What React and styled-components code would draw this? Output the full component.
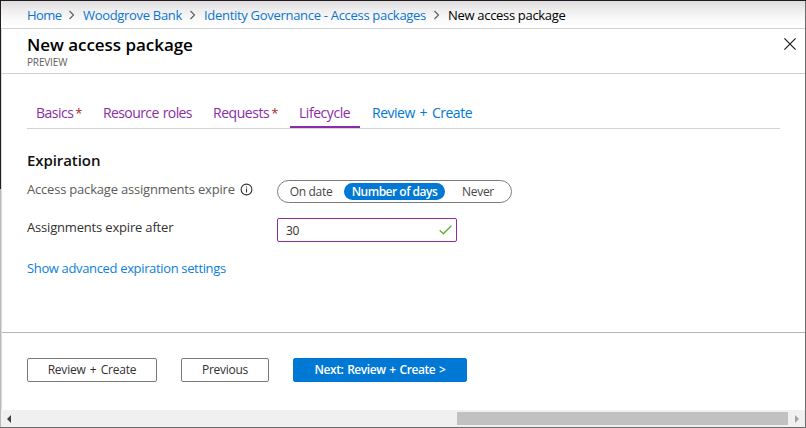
import React from "react";
import styled, { createGlobalStyle } from "styled-components";

const Global = createGlobalStyle`
  * { box-sizing: border-box; }
  body { margin: 0; overflow: hidden; background: #fff; }
  button, input { font: inherit; margin: 0; }
`;

const Label = styled.span`
  letter-spacing: ${(p) => p.$track || 0}px;
  word-spacing: ${(p) => p.$words || 0}px;
  white-space: nowrap;
`;

const Window = styled.div`
  display: grid;
  grid-template-columns: 1px 1fr 1px;
  grid-template-rows: 1px 426px 1px;
  width: 806px;
  height: 428px;
  font-family: "Open Sans", "Noto Sans", sans-serif;
  color: #323130;
`;
const TopEdge = styled.div`
  grid-column: 1 / -1;
  background: #1f1a1e;
`;
const LeftEdge = styled.div`
  background: linear-gradient(#231f20 188px, #b9b9b9 188px);
`;
const RightEdge = styled.div`
  background: #6b6b6b;
`;
const BottomEdge = styled.div`
  grid-column: 1 / -1;
  background: #6b6b6b;
`;
const Blade = styled.div`
  display: flex;
  flex-direction: column;
  min-width: 0;
`;

const Breadcrumbs = styled.nav`
  display: flex;
  align-items: center;
  height: 27px;
  padding: 1px 0 0 26px;
  background: linear-gradient(#dedcde, #efeeef 9px, #fafafa 19px, #fff);
  font-size: 13px;
  line-height: 20px;
`;
const Crumb = styled.a`
  width: ${(p) => p.$w}px;
  flex: none;
  white-space: nowrap;
  letter-spacing: ${(p) => p.$track}px;
  color: ${(p) => (p.$current ? "#000" : "#0c74cf")};
`;
const Separator = styled.svg`
  width: 22px;
  height: 12px;
  flex: none;
  fill: none;
  stroke: #5c5c5c;
  stroke-width: 1.1;
`;

const Panel = styled.main`
  display: flex;
  flex-direction: column;
  height: 382px;
  border-top: 1px solid #d2d2d2;
  border-left: 1px solid #dadada;
`;
const Header = styled.header`
  display: flex;
  justify-content: space-between;
  height: 45px;
  padding: 5px 9px 0 25px;
  border-bottom: 1px solid #d2d2d2;
`;
const Title = styled.h1`
  margin: 0;
  font-size: 17px;
  font-weight: 600;
  line-height: 22px;
  letter-spacing: -0.04px;
  color: #000;
`;
const Tag = styled.div`
  margin-top: -1px;
  font-size: 10px;
  line-height: 14px;
  letter-spacing: -0.15px;
  color: #605e5c;
`;
const CloseButton = styled.button`
  display: flex;
  width: 12px;
  height: 12px;
  margin-top: 4px;
  padding: 0;
  border: 0;
  background: none;
  svg { width: 12px; height: 12px; stroke: #1b1b1b; stroke-width: 1.2; }
`;

const Tabs = styled.nav`
  display: flex;
  gap: 3px;
  height: 30px;
  margin: 25px 25px 0 25px;
  border-bottom: 1px solid #d2d2d2;
`;
const Tab = styled.a`
  width: ${(p) => p.$w}px;
  height: 29px;
  padding-left: 9px;
  border-bottom: 2px solid ${(p) => (p.$active ? "#8a2da5" : "transparent")};
  color: ${(p) => (p.$next ? "#0078d4" : "#8a2da5")};
  font-size: 14px;
  line-height: 27px;
  white-space: nowrap;
`;
const Required = styled.span`
  margin-left: 2px;
  color: #a4262c;
  font-size: 13px;
`;

const Form = styled.section`
  display: flex;
  flex-direction: column;
  height: 203px;
  padding: 21px 0 0 25px;
`;
const SectionTitle = styled.h2`
  margin: 0;
  font-size: 15px;
  font-weight: 600;
  line-height: 20px;
  letter-spacing: -0.08px;
  color: #111;
`;
const Field = styled.div`
  display: flex;
  align-items: flex-start;
  height: 38px;
  margin-top: ${(p) => p.$top || 0}px;
`;
const FieldLabel = styled.div`
  display: flex;
  align-items: center;
  gap: 5px;
  width: 250px;
  height: 20px;
  margin-top: -1px;
  font-size: 13px;
  color: ${(p) => (p.$muted ? "#5c5b5a" : "#323130")};
`;
const InfoIcon = styled.svg`
  width: 13px;
  height: 13px;
`;
const Segments = styled.div`
  display: flex;
  align-items: center;
  width: 235px;
  height: 23px;
  padding-left: 2px;
  border: 1px solid #7c7c7c;
  border-radius: 12px;
`;
const Segment = styled.button`
  width: ${(p) => p.$w}px;
  height: 17px;
  padding: 0;
  border: 0;
  border-radius: 9px;
  background: ${(p) => (p.$selected ? "#0078d4" : "transparent")};
  color: ${(p) => (p.$selected ? "#fff" : "#484644")};
  font-size: 12px;
  font-weight: ${(p) => (p.$selected ? 600 : 400)};
  line-height: 17px;
`;
const TextBox = styled.div`
  display: flex;
  align-items: center;
  justify-content: space-between;
  width: 180px;
  height: 24px;
  padding: 0 4px 0 8px;
  border: 1px solid #8a2da5;
  border-radius: 2px;
`;
const Input = styled.input`
  width: 120px;
  height: 20px;
  padding: 1px 0 0;
  border: 0;
  outline: 0;
  background: none;
  color: #323130;
  font-size: 12px;
  letter-spacing: -0.4px;
`;
const Check = styled.svg`
  width: 13px;
  height: 10px;
  fill: none;
  stroke: #5db02f;
  stroke-width: 1.3;
`;
const Link = styled.a`
  margin-top: 2px;
  font-size: 13px;
  line-height: 20px;
  color: #0c80d8;
`;

const Footer = styled.footer`
  display: flex;
  gap: 24px;
  height: 78px;
  padding: 25px 0 0 25px;
  border-top: 1px solid #b5b5b5;
`;
const Button = styled.button`
  width: ${(p) => p.$w}px;
  height: 24px;
  padding: 0;
  border: 1px solid ${(p) => (p.$primary ? "#0078d4" : "#7a7a7a")};
  border-radius: 2px;
  background: ${(p) => (p.$primary ? "#0078d4" : "#fff")};
  color: ${(p) => (p.$primary ? "#fff" : "#323130")};
  font-size: 12px;
  font-weight: ${(p) => (p.$primary ? 600 : 400)};
  line-height: 22px;
`;

const ScrollBar = styled.div`
  display: flex;
  align-items: center;
  justify-content: space-between;
  height: 17px;
  padding: 0 6px;
  background: #f0f0f0;
`;
const ScrollThumb = styled.div`
  width: 331px;
  height: 13px;
  margin: 0 7px 0 auto;
  background: #c1c1c1;
`;
const ScrollArrow = styled.svg`
  width: 4px;
  height: 8px;
  fill: ${(p) => (p.$dim ? "#a3a3a3" : "#404040")};
`;

const Chevron = () => (
  <Separator viewBox="0 0 22 12"><path d="M8.5 2 12.5 6 8.5 10" /></Separator>
);

export default function App() {
  return (
    <>
      <Global />
      <Window>
        <TopEdge />
        <LeftEdge />
        <Blade>
          <Breadcrumbs>
            <Crumb $w={34} $track={-0.6}>Home</Crumb>
            <Chevron />
            <Crumb $w={99} $track={-0.31}>Woodgrove Bank</Crumb>
            <Chevron />
            <Crumb $w={222} $track={-0.3}>Identity Governance - Access packages</Crumb>
            <Chevron />
            <Crumb $w={118} $track={-0.31} $current>New access package</Crumb>
          </Breadcrumbs>
          <Panel>
            <Header>
              <div>
                <Title>New access package</Title>
                <Tag>PREVIEW</Tag>
              </div>
              <CloseButton aria-label="Close">
                <svg viewBox="0 0 12 12"><path d="M0.4 0.4 11.6 11.6M11.6 0.4 0.4 11.6" /></svg>
              </CloseButton>
            </Header>
            <Tabs>
              <Tab $w={64}><Label $track={-0.52}>Basics</Label><Required>*</Required></Tab>
              <Tab $w={107}><Label $track={-0.6} $words={1}>Resource roles</Label></Tab>
              <Tab $w={83}><Label $track={-0.45}>Requests</Label><Required>*</Required></Tab>
              <Tab $w={70} $active><Label $track={-0.45}>Lifecycle</Label></Tab>
              <Tab $w={118} $next><Label $track={-0.48} $words={1.6}>Review + Create</Label></Tab>
            </Tabs>
            <Form>
              <SectionTitle>Expiration</SectionTitle>
              <Field $top={10}>
                <FieldLabel $muted>
                  <Label $track={-0.2}>Access package assignments expire</Label>
                  <InfoIcon viewBox="0 0 13 13">
                    <circle cx="6.5" cy="6.5" r="5.4" fill="none" stroke="#323130" strokeWidth="1.1" />
                    <path d="M6.5 5.6V9.5M6.5 3.4V4.6" stroke="#323130" strokeWidth="1.1" />
                  </InfoIcon>
                </FieldLabel>
                <Segments>
                  <Segment $w={62}><Label $track={-0.3}>On date</Label></Segment>
                  <Segment $w={2} as="span" />
                  <Segment $w={101} $selected><Label $track={-0.5}>Number of days</Label></Segment>
                  <Segment $w={66}><Label $track={-0.28}>Never</Label></Segment>
                </Segments>
              </Field>
              <Field>
                <FieldLabel><Label $track={-0.18}>Assignments expire after</Label></FieldLabel>
                <TextBox>
                  <Input defaultValue="30" />
                  <Check viewBox="0 0 13 10"><path d="M0.7 5.2 4.4 8.8 12.3 0.8" /></Check>
                </TextBox>
              </Field>
              <Link><Label $track={-0.35}>Show advanced expiration settings</Label></Link>
            </Form>
            <Footer>
              <Button $w={130}><Label $track={-0.22} $words={1.4}>Review + Create</Label></Button>
              <Button $w={88}><Label $track={-0.25}>Previous</Label></Button>
              <Button $w={174} $primary><Label $track={-0.42} $words={1}>Next: Review + Create &gt;</Label></Button>
            </Footer>
          </Panel>
          <ScrollBar>
            <ScrollArrow viewBox="0 0 4 8"><path d="M4 0V8L0 4Z" /></ScrollArrow>
            <ScrollThumb />
            <ScrollArrow $dim viewBox="0 0 4 8"><path d="M0 0V8L4 4Z" /></ScrollArrow>
          </ScrollBar>
        </Blade>
        <RightEdge />
        <BottomEdge />
      </Window>
    </>
  );
}
